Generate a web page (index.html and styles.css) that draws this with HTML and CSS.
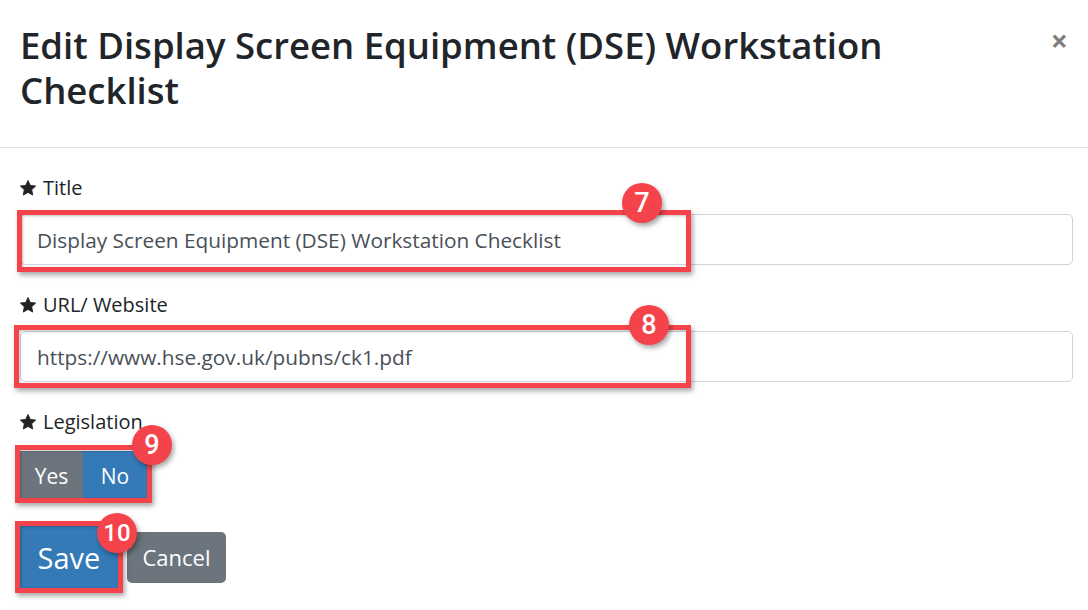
FILE: index.html
```html
<!DOCTYPE html>
<html lang="en">

<head>
  <meta charset="UTF-8" />
  <meta name="viewport" content="width=device-width, initial-scale=1.0" />
  <title>Edit DSE Checklist</title>
  <link rel="stylesheet" href="styles.css">
</head>

<body>
  <div class="modal">
    <div class="modal-header">
      <h3 class="modal-title">Edit Display Screen Equipment (DSE) Workstation Checklist</h3>
      <button type="button" class="close">&times;</button>
    </div>

    <form class="modal-body">
      <!-- Title -->
      <div class="form-group">
        <label class="req">
          <svg class="star" viewBox="0 0 24 24"><path d="M12 2l3.1 6.6 7.1.8-5.3 4.9 1.4 7.1L12 17.9l-6.3 3.5 1.4-7.1-5.3-4.9 7.1-.8z" /></svg>
          Title
        </label>
        <div class="field">
          <input type="text" class="form-control" value="Display Screen Equipment (DSE) Workstation Checklist" />
          <span class="mark mark-title"><span class="step step-7">7</span></span>
        </div>
      </div>

      <!-- URL -->
      <div class="form-group">
        <label class="req">
          <svg class="star" viewBox="0 0 24 24"><path d="M12 2l3.1 6.6 7.1.8-5.3 4.9 1.4 7.1L12 17.9l-6.3 3.5 1.4-7.1-5.3-4.9 7.1-.8z" /></svg>
          URL/ Website
        </label>
        <div class="field">
          <input type="text" class="form-control" value="https://www.hse.gov.uk/pubns/ck1.pdf" />
          <span class="mark mark-url"><span class="step step-8">8</span></span>
        </div>
      </div>

      <!-- Legislation -->
      <div class="form-group">
        <label class="req">
          <svg class="star" viewBox="0 0 24 24"><path d="M12 2l3.1 6.6 7.1.8-5.3 4.9 1.4 7.1L12 17.9l-6.3 3.5 1.4-7.1-5.3-4.9 7.1-.8z" /></svg>
          Legislation
        </label>
        <div class="field toggle">
          <button type="button" class="btn btn-gray">Yes</button>
          <button type="button" class="btn btn-blue">No</button>
          <span class="mark mark-toggle"><span class="step step-9">9</span></span>
        </div>
      </div>

      <div class="actions">
        <div class="field">
          <button type="submit" class="btn btn-save">Save</button>
          <span class="mark mark-save"><span class="step step-10">10</span></span>
        </div>
        <button type="button" class="btn btn-cancel">Cancel</button>
      </div>
    </form>
  </div>
</body>

</html>
```

FILE: styles.css
```css
* {
  margin: 0;
  padding: 0;
  box-sizing: border-box;
  font-family: "Open Sans", "Noto Sans", sans-serif;
}

body {
  background: #fff;
  color: #212529;
  width: 1088px;
  height: 610px;
  overflow: hidden;
}

.modal-header {
  display: flex;
  justify-content: space-between;
  align-items: flex-start;
  padding: 23px 20px 14px 20px;
  border-bottom: 1px solid #dee2e6;
  height: 148px;
}

.modal-title {
  font-size: 36.5px;
  font-weight: 600;
  line-height: 45px;
  color: #212529;
  max-width: 920px;
}

.close {
  background: none;
  border: none;
  font-size: 30px;
  font-weight: 700;
  line-height: 1;
  color: #000;
  opacity: 0.5;
  margin-top: 3px;
  cursor: pointer;
}

.modal-body {
  padding: 28px 15px 0 20px;
}

.form-group {
  margin-bottom: 28px;
}

.req {
  display: flex;
  align-items: center;
  gap: 6px;
  font-size: 20px;
  line-height: 24px;
  margin-bottom: 14px;
}

.star {
  width: 18px;
  height: 18px;
  margin-left: -1px;
  fill: #222;
  stroke: #222;
  stroke-width: 1.2;
  stroke-linejoin: round;
}

.field {
  position: relative;
}

.form-control {
  display: block;
  width: 100%;
  height: 51px;
  padding: 0 16px;
  font-size: 20.8px;
  color: #495057;
  border: 1px solid #ced4da;
  border-radius: 5px;
  background: #fff;
  outline: none;
}

.btn {
  border: none;
  color: #fff;
  cursor: pointer;
}

.toggle {
  display: inline-flex;
  margin-top: 3px;
}

.btn-gray {
  background: #6c757d;
  width: 63px;
  height: 49px;
  font-size: 21px;
}

.btn-blue {
  background: #337ab7;
  width: 64px;
  height: 49px;
  font-size: 21px;
}

.actions {
  display: flex;
  align-items: center;
  gap: 9px;
  margin-top: -2px;
}

.btn-save {
  display: block;
  background: #337ab7;
  width: 98px;
  height: 62px;
  font-size: 29px;
}

.btn-cancel {
  background: #6c757d;
  width: 99px;
  height: 51px;
  font-size: 22px;
  border-radius: 5px;
}

/* Red annotation boxes */
.mark {
  position: absolute;
  border: 5px solid #f4434a;
  box-shadow: 2px 3px 5px rgba(0, 0, 0, 0.35), inset 1px 1px 3px rgba(0, 0, 0, 0.25);
  pointer-events: none;
}

.mark-title {
  left: -3px;
  top: -4px;
  width: 674px;
  height: 62px;
}

.mark-url {
  left: -6px;
  top: -6px;
  width: 677px;
  height: 63px;
}

.mark-toggle {
  left: -5px;
  top: -6px;
  width: 137px;
  height: 58px;
}

.mark-save {
  left: -5px;
  top: -5px;
  width: 108px;
  height: 72px;
}

.step {
  position: absolute;
  width: 40px;
  height: 40px;
  margin: -20px 0 0 -20px;
  border-radius: 50%;
  background: #f4434a;
  color: #fff;
  font-family: Roboto, "Liberation Sans", sans-serif;
  font-size: 27px;
  font-weight: 500;
  line-height: 40px;
  text-align: center;
  box-shadow: 2px 3px 5px rgba(0, 0, 0, 0.35);
}

.step-7 {
  left: 620px;
  top: -12px;
}

.step-8 {
  left: 630px;
  top: -5px;
}

.step-9 {
  left: 132px;
  top: -5px;
}

.step-10 {
  left: 97px;
  top: 7px;
  font-size: 24px;
}
```
